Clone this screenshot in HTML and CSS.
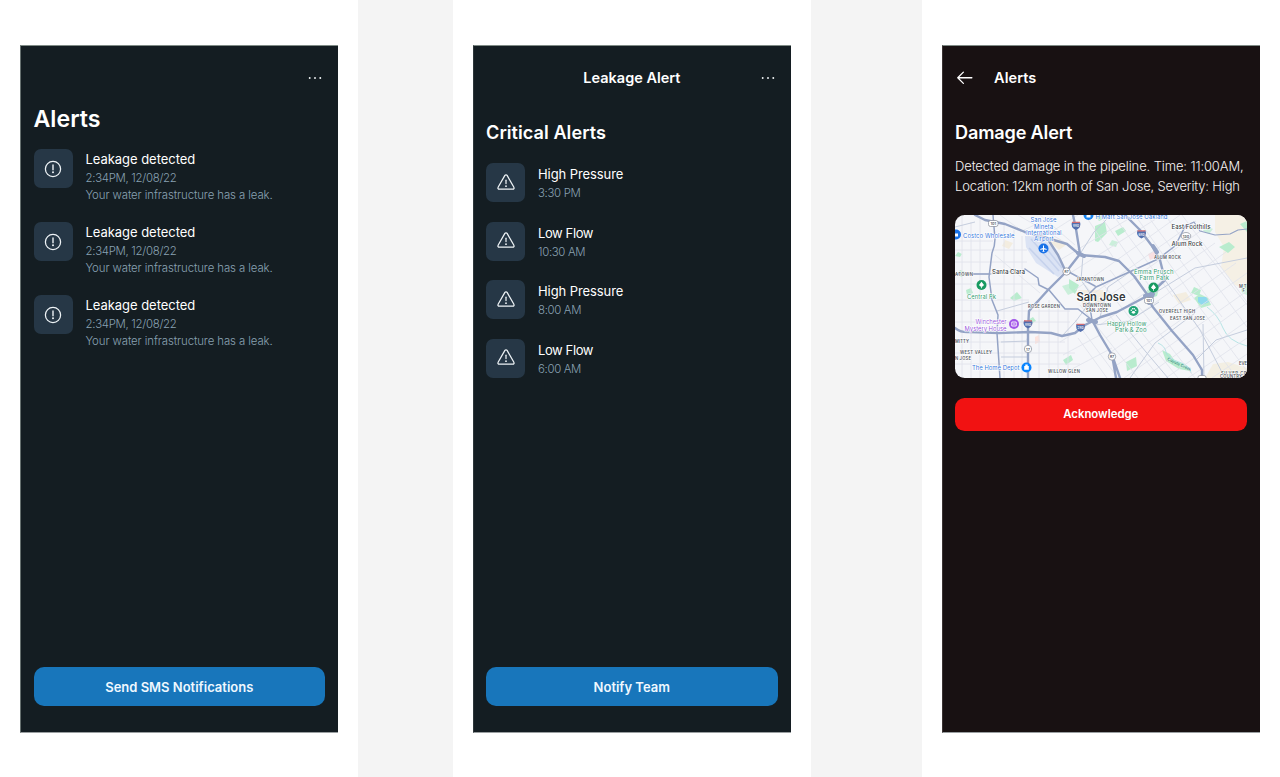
FILE: index.html
```html
<!DOCTYPE html>
<html lang="en">
<head>
<meta charset="utf-8">
<title>Alerts</title>
<link rel="stylesheet" href="styles.css">
</head>
<body>
<svg class="defs" width="0" height="0" aria-hidden="true">
  <symbol id="dots" viewBox="0 0 16 4"><circle cx="2.7" cy="2" r=".95"/><circle cx="8" cy="2" r=".95"/><circle cx="13.3" cy="2" r=".95"/></symbol>
  <symbol id="info" viewBox="0 0 20 20"><circle cx="10" cy="10" r="7.6" fill="none" stroke="currentColor" stroke-width="1.25"/><path d="M10 6v4.8" fill="none" stroke="currentColor" stroke-width="1.4" stroke-linecap="round"/><circle cx="10" cy="13.3" r="1"/></symbol>
  <symbol id="warn" viewBox="0 0 20 20"><path d="M8.9 2.4a1.3 1.3 0 0 1 2.2 0l6.8 11.9a1.25 1.25 0 0 1-1.1 1.9H3.2a1.25 1.25 0 0 1-1.1-1.9z" fill="none" stroke="currentColor" stroke-width="1.25" stroke-linejoin="round"/><path d="M10 7.2v3.4" fill="none" stroke="currentColor" stroke-width="1.25" stroke-linecap="round"/><circle cx="10" cy="13.2" r=".9"/></symbol>
</svg>
<main class="board">
  <section class="panel">
    <div class="phone">
      <header class="bar"><svg class="more"><use href="#dots"/></svg></header>
      <h1 class="title-lg">Alerts</h1>
      <ul class="list leaks">
        <li class="item"><span class="tile"><svg class="glyph"><use href="#info"/></svg></span><div class="copy"><p class="name t-leak">Leakage detected</p><p class="meta t-date">2:34PM, 12/08/22</p><p class="meta t-note">Your water infrastructure has a leak.</p></div></li>
        <li class="item"><span class="tile"><svg class="glyph"><use href="#info"/></svg></span><div class="copy"><p class="name t-leak">Leakage detected</p><p class="meta t-date">2:34PM, 12/08/22</p><p class="meta t-note">Your water infrastructure has a leak.</p></div></li>
        <li class="item"><span class="tile"><svg class="glyph"><use href="#info"/></svg></span><div class="copy"><p class="name t-leak">Leakage detected</p><p class="meta t-date">2:34PM, 12/08/22</p><p class="meta t-note">Your water infrastructure has a leak.</p></div></li>
      </ul>
      <button class="btn blue"><span class="t-sms">Send SMS Notifications</span></button>
    </div>
  </section>
  <section class="panel second">
    <div class="phone">
      <header class="bar"><span class="bar-title centered">Leakage Alert</span><svg class="more"><use href="#dots"/></svg></header>
      <h2 class="title t-critical">Critical Alerts</h2>
      <ul class="list critical">
        <li class="item"><span class="tile"><svg class="glyph"><use href="#warn"/></svg></span><div class="copy"><p class="name t-high">High Pressure</p><p class="meta t-time">3:30 PM</p></div></li>
        <li class="item"><span class="tile"><svg class="glyph"><use href="#warn"/></svg></span><div class="copy"><p class="name t-low">Low Flow</p><p class="meta t-time">10:30 AM</p></div></li>
        <li class="item"><span class="tile"><svg class="glyph"><use href="#warn"/></svg></span><div class="copy"><p class="name t-high">High Pressure</p><p class="meta t-time">8:00 AM</p></div></li>
        <li class="item"><span class="tile"><svg class="glyph"><use href="#warn"/></svg></span><div class="copy"><p class="name t-low">Low Flow</p><p class="meta t-time">6:00 AM</p></div></li>
      </ul>
      <button class="btn blue"><span class="t-notify">Notify Team</span></button>
    </div>
  </section>
  <section class="panel third">
    <div class="phone dark">
      <header class="bar left"><svg class="back" viewBox="0 0 20 20"><path d="M17.3 10H2.8M8.6 4.2 2.8 10l5.8 5.8" fill="none" stroke="currentColor" stroke-width="1.3" stroke-linecap="round" stroke-linejoin="round"/></svg><span class="bar-title t-back">Alerts</span></header>
      <h2 class="title t-damage">Damage Alert</h2>
      <p class="body"><span class="b1">Detected damage in the pipeline. Time: 11:00AM,</span><br><span class="b2">Location: 12km north of San Jose, Severity: High</span></p>
      <svg class="map" viewBox="955 215 292 163">
        <rect x="955" y="215" width="292" height="163" fill="#f5f6f9"/>
        <!-- terrain, parks and water -->
        <path d="M1215 215h32v75l-12-5-14-18 3-20-9-15z" fill="#f5f0e5"/>
        <path d="M1205 378l8-14 15-2 19 6v10z" fill="#f3efe3"/>
        <g fill="#f3ede0"><path d="M1050 242l10-3 6 6-7 5z"/><path d="M1005 240l8 3-4 6-7-3z"/><path d="M1173 295l13-3 5 8-12 4z"/><path d="M1078 290h25v16h-20z"/></g>
        <path d="M1025 236l18 1 14 17 9 17-8 6-22-14-10-16z" fill="#dbe3f4"/>
        <path d="M1031 239l28 32M1039 239l23 29M1029 248l25 26" stroke="#c6d2ec" stroke-width="1.6" fill="none"/>
        <g fill="#b9ecce">
          <path d="M1095 226l10-4 2 11-9 9-3-1zM1096 217l6-2 8 1-11 5zM1115 231l8-4 3 4-8 5zM1240 224l7-3v11zM1219 247l10-5 6 5-7 6zM1194 287l7 3-2 6-8-3zM1069 279l10 6-4 9-6-6zM1010 298l7-6 5 6-8 3zM966 290l5-2 2 5-6 2zM1147 290l12-2-2 8-12 4zM1162 350l8 4 5 7 10 3 5 7-11-2-13-8zM1126 362l10-5 1 9-10 5zM1063 360l8-5 2 5-7 5zM1028 320l5-3 3 4-5 3zM1194 298l6-4 8 4 3 7-10 3zM958 252l4 2-2 3-5-1zM960 270l5 2-3 5-5-2z"/>
          <path d="M1062 286l10-3 5 8-9 4zM1240 285l7-2v12l-5-2zM1112 240l6 2-2 5-7-2zM1206 226l7 3-4 5-6-3z" opacity=".7"/>
        </g>
        <path d="M1198 297l8 0 3 5-7 3-4-3z" fill="#8ed9ee"/>
        <path d="M1148 254l7-3 2 6-7 3z" fill="#f9e0e2"/><path d="M1035 337l4-2 1 7-5 2z" fill="#fbe3de"/>
        <path d="M1158 343q7 3 8 9t13 10 12 11M1207 307q11 8 16 21t24 18" stroke="#a7dfe0" stroke-width=".8" fill="none"/>
        <!-- local streets -->
        <g stroke="#dfe2eb" stroke-width=".8" fill="none">
          <path d="M955 241h38M955 250h72M955 262h72M955 284h85M955 300h74M955 311h115M955 322h115M955 342h110M955 353h120M955 364h125M962 215v163M971 222v156M980 219v159M1004 225v153M1014 230v148M1022 236v142M1039 300v78M1049 300v78M1058 305v73M1068 310v68"/>
          <path d="M1000 215l30 22M1018 215l48 28M1040 215l35 30M995 255l45 38M1085 215l28 42M1100 215l50 72M1113 215l60 82M1135 215l60 85M1147 215l75 102M1165 215l82 112M1182 215l65 87M1200 245l47 60M1085 285l75 93M1098 278l80 100M1110 270l85 108M1080 305l58 73M1075 320l43 58M1078 338l29 40M1180 303l57 75M1198 305l49 66"/>
          <path d="M1020 232l35-17M1048 234l30-19M1060 260l75-45M1067 275l95-60M1075 290l105-75M1086 299l110-78M1092 308l110-78M1100 325l115-82M1106 338l120-86M1111 352l125-89M1117 365l130-92M1124 378l123-87M1144 378l103-75M1166 378l81-57M1188 378l59-40M1212 378l35-24M1060 342l35-22M1063 355l37-20M1070 370l42-22"/>
        </g>
        <g stroke="#c5cddd" stroke-width="1" fill="none">
          <path d="M955 227l20-5M955 274h35l35-4M997 311l32-9M1001 342l27-1M1001 357h27M1062 336l14-15 14-19M1029 332l-2 8M1080 254l14-22 17-17M1083 255l-2 25 17 25M1100 317l8-30 25-17M1116 315l30 37 22 26M1095 325l34-4 30-19M1130 378l25-35 40-30M1150 296l45-28 52-10M1165 280l35 50 25 48M1203 324l1 54M1196 360l20-20 31-10"/>
        </g>
        <!-- highways -->
        <g stroke="#94a3c5" fill="none" stroke-linecap="round" stroke-linejoin="round">
          <g stroke-width="1.5">
            <path d="M955 274h35M993 215l2 24q0 7-3 14l-3 24 3 23 6 15-1 18 1 15 2 30"/>
            <path d="M1025 269l13 9 1 7 10 5 16 19h13l14 11M1092 320l-4-25 8-8 40-18 22-10 17-13 11-21M1095 286l-28-15"/>
            <path d="M1185 226l9-4 6 9 15 4 15-1 8-4 9-1" stroke-width="1.2"/>
          </g>
          <g stroke-width="2.4">
            <path d="M975 215l10 5 20 4 20 8 22 6 20 6 13 11 25 2 14 4 15 15 15 21 3 9 20 25 21 24 9 15v8"/>
            <path d="M1073 215l3 14 4 25-14 18-18 18-19 21-1 18v49M1047 238l11 17 8 17"/>
            <path d="M955 328q6 5 15 4l29 1 31-1 21 1 11 3 13-3 10-8 16-8 16-5 15-8 17-9 16-15-5-20-8-14-12-16-15-15"/>
            <path d="M1092 320l8 15 12 20 4 23M1112 355l8 23"/>
          </g>
          <path d="M1145 296l8-2-4 9M1088 320l8 2M1078 253l6 3M1153 246l4 6" stroke-width="4"/>
        </g>
        <!-- route shields -->
        <g stroke="#858b98" stroke-width=".7" fill="#fff">
          <rect x="988.5" y="220.5" width="9.5" height="6" rx="2"/><circle cx="1066.5" cy="271.5" r="3.7"/><circle cx="1028" cy="349" r="3.7"/><circle cx="1112" cy="356.500" r="3.7"/><ellipse cx="1186" cy="236" rx="4.800" ry="3.500"/><rect x="1144.500" y="297.500" width="9" height="6" rx="2"/><rect x="1198" y="375.500" width="8" height="6" rx="2"/>
        </g>
        <g class="shield-no"><text x="993.300" y="225.200">101</text><text x="1066.500" y="273">87</text><text x="1028" y="350.500">17</text><text x="1112" y="358">87</text><text x="1186" y="237.500">130</text><text x="1149" y="302.200">101</text></g>
        <g fill="#526fae"><path id="shield" d="M1072 222q4 1.500 8 0 2 5-4 8-6-3-4-8z"/><use href="#shield" x="65.500" y="8.500"/><use href="#shield" x="-48" y="98.500"/><use href="#shield" x="4.500" y="102"/></g>
        <g stroke="#d26d72" stroke-width="1.300"><path d="M1072 222.300h8M1137.500 230.800h8M1024 320.800h8M1076.500 324.300h8"/></g>
        <g class="shield-no inv"><text x="1076" y="227.300">880</text><text x="1141.500" y="235.800">680</text><text x="1028" y="325.800">880</text><text x="1080.500" y="329.300">280</text></g>
        <!-- place pins -->
        <g><circle cx="956" cy="234.500" r="5" fill="#1a73e8"/><circle cx="1043.500" cy="248.500" r="5" fill="#1a73e8"/><circle cx="1088.500" cy="215" r="5" fill="#1683f0"/><circle cx="1026.500" cy="367.500" r="5" fill="#0a85ff"/><circle cx="981.500" cy="285" r="5" fill="#189a61"/><circle cx="1153.500" cy="287.500" r="5" fill="#189a61"/><circle cx="1133.500" cy="311" r="5" fill="#22a477"/><circle cx="1014" cy="324" r="5" fill="#a257e8"/></g>
        <g fill="#fff"><path d="M1043 245.500h1v2.500l2.800 1v.8l-2.800-.4v1.600l1 .8h-3l1-.8v-1.600l-2.800.4v-.8l2.800-1z"/><path d="M981.500 281.700l2.500 3.300-1.300 1.500h-.8v1.700h-.8v-1.700h-.8l-1.300-1.500z"/><path d="M1153.500 284.200l2.500 3.300-1.300 1.500h-.8v1.700h-.8v-1.700h-.8l-1.300-1.500z"/><circle cx="1131.300" cy="310.300" r=".8"/><circle cx="1132.700" cy="308.700" r=".8"/><circle cx="1134.300" cy="308.700" r=".8"/><circle cx="1135.700" cy="310.300" r=".8"/><ellipse cx="1133.500" cy="312.300" rx="1.700" ry="1.400"/><path d="M1024.200 366h4.600v3.800h-4.600zM1025.300 366v-1.400h2.400v1.400zM954.500 233.500h3.500v3h-3.500zM1086.500 215h4v2.500h-4z"/></g>
        <path d="M1011.800 322h4.400v4h-4.400zM1013 324h2" stroke="#fff" stroke-width=".9" fill="none"/>
        <!-- labels -->
        <g class="lbl blue-l"><text x="963" y="237.800" textLength="51.500">Costco Wholesale</text><text x="1030.500" y="222" textLength="26">San Jose</text><text x="1034" y="228.500" textLength="19">Mineta</text><text x="1026" y="235" textLength="35.500">International</text><text x="1034" y="241.300" textLength="19.500">Airport</text><text x="1095.500" y="218.600" textLength="72">H Mart San Jose Oakland</text><text x="972" y="370.300" textLength="47.500">The Home Depot</text></g>
        <g class="lbl green-l"><text x="967" y="298.800" textLength="29">Central Pk</text><text x="1134" y="273.700" textLength="39.500">Emma Prusch</text><text x="1139.500" y="280" textLength="29.500">Farm Park</text><text x="1107" y="325.500" textLength="39.500">Happy Hollow</text><text x="1115" y="331.700" textLength="31.500">Park &amp; Zoo</text><text class="creek" x="1167" y="360" transform="rotate(25 1167 360)">Coyote Creek</text></g>
        <g class="lbl purple-l"><text x="975.500" y="324" textLength="31">Winchester</text><text x="964.500" y="330.500" textLength="42">Mystery House</text></g>
        <g class="lbl town"><text x="992" y="273.500" textLength="33">Santa Clara</text><text x="1171.500" y="228.500" textLength="39">East Foothills</text><text x="1171.500" y="245.500" textLength="31">Alum Rock</text></g>
        <text class="city" x="1076.500" y="301" textLength="49">San Jose</text>
        <g class="hood"><text x="955" y="276" textLength="18">ATOWN</text><text x="1076" y="280.500" textLength="28">JAPANTOWN</text><text x="1154" y="259.300" textLength="27">ALUM ROCK</text><text x="1028" y="307.800" textLength="32">ROSE GARDEN</text><text x="1083" y="307.300" textLength="28">DOWNTOWN</text><text x="1086" y="311.800" textLength="22">SAN JOSE</text><text x="1159" y="312.500" textLength="36">OVERFELT HIGH</text><text x="1170" y="319.500" textLength="35">EAST SAN JOSE</text><text x="955" y="343.300" textLength="14">MITTY</text><text x="960" y="354.300" textLength="32">WEST VALLEY</text><text x="955" y="359.500" textLength="16">N JOSE</text><text x="1048" y="372.500" textLength="32">WILLOW GLEN</text><text x="1239" y="288.300" textLength="7.500">MT</text><text x="1242.500" y="292.300">F</text><text x="1239" y="364.500">EVE</text><text x="1221" y="374.500" textLength="25.500">SILVER CR</text><text x="1220" y="378" textLength="26.500">COUNTRY C</text></g>
      </svg>
      <button class="btn red"><span class="t-ack">Acknowledge</span></button>
    </div>
  </section>
</main>
</body>
</html>
```

FILE: styles.css
```css
* { box-sizing: border-box; margin: 0; padding: 0; }
body { background: #f4f4f4; font-family: Inter, "Liberation Sans", sans-serif; overflow: hidden; }
.defs { display: block; position: absolute; }
.board { display: flex; height: 777px; }
.panel { width: 358px; flex: none; background: #fff; padding: 45px 20px 44px; }
.second { margin-left: 95px; }
.third { margin-left: 111px; }
.phone { width: 318px; height: 688px; background: #141d22; border-top: 1px solid #7f8b86; border-left: 1px solid #66706f; border-bottom: 1px solid #9a9fa1; color: #fff; padding: 0 13px 26px 12.500px; display: flex; flex-direction: column; }
.second .phone, .third .phone { border-left-color: #2d363a; padding-left: 12px; padding-right: 13.500px; }
.phone.dark { background: #181112; }
.third .phone { border-left-color: #3a3333; }
.bar { height: 64px; flex: none; display: flex; align-items: center; justify-content: flex-end; padding-right: 2px; }
.bar.left { justify-content: flex-start; }
.more { width: 16px; height: 4px; fill: #f3f6f8; }
.bar-title { font-size: 14.500px; font-weight: 600; line-height: 20px; white-space: nowrap; }
.centered { margin-right: 79px; }
.t-back { letter-spacing: .08px; }
.back { width: 19.500px; height: 19.500px; margin-right: 19.500px; }
.title-lg { font-size: 23.200px; font-weight: 600; line-height: 30px; margin-top: -6px; }
.title { font-size: 18.100px; font-weight: 600; line-height: 24px; margin-top: 10px; white-space: nowrap; }
.t-damage { letter-spacing: -.16px; }
.t-critical { letter-spacing: .05px; }
.list { list-style: none; display: flex; flex-direction: column; }
.leaks { gap: 20.200px; margin-top: 15px; }
.critical { gap: 19.600px; margin-top: 19px; }
.item { display: flex; gap: 13px; }
.leaks .item { height: 53px; }
.tile { width: 39px; height: 39px; flex: none; border-radius: 7px; background: #263746; color: #eef3f6; display: grid; place-items: center; }
.glyph { width: 20px; height: 20px; fill: currentColor; }
.critical .copy { padding-top: 1px; }
.name { font-size: 13px; line-height: 20px; white-space: nowrap; }
.meta { font-size: 11.400px; line-height: 17.500px; color: #89a1b2; font-weight: 300; white-space: nowrap; }
.t-leak { letter-spacing: -.04px; }
.t-date { letter-spacing: -.28px; line-height: 18px; }
.t-note { letter-spacing: -.09px; line-height: 17px; }
.t-high { letter-spacing: -.08px; }
.t-low { letter-spacing: -.4px; }
.t-time { letter-spacing: -.32px; line-height: 18px; }
.btn { width: 100%; border: 0; color: #fff; font-family: inherit; font-weight: 600; display: flex; align-items: center; justify-content: center; flex: none; white-space: nowrap; }
.blue { height: 39px; border-radius: 10px; background: #1876bb; font-size: 13px; margin-top: auto; color: #eff8ff; }
.red { height: 32.500px; border-radius: 9.500px; background: #f11212; font-size: 11.400px; margin-top: 20px; }
.body { margin-top: 13px; font-size: 13px; font-weight: 300; line-height: 19.500px; color: #f7f3f3; white-space: nowrap; }
.b1 { letter-spacing: -.12px; }
.b2 { letter-spacing: -.18px; }
.map { width: 292px; height: 163px; flex: none; margin-top: 19px; border-radius: 9.500px; display: block; }
.lbl { font-size: 6px; stroke: #fff; stroke-width: 1.200px; paint-order: stroke; }
.blue-l { fill: #3478dc; }
.green-l { fill: #2f9b70; }
.creek { font-size: 4px; fill: #23807c; stroke: none; }
.purple-l { fill: #9a55dd; }
.town { fill: #383d43; font-weight: 500; font-size: 6.200px; }
.city { fill: #33373c; font-size: 11.200px; font-weight: 600; stroke: #fff; stroke-width: 1.500px; paint-order: stroke; }
.hood { fill: #53585f; font-size: 4.200px; font-weight: 600; stroke: #fff; stroke-width: .8px; paint-order: stroke; }
.shield-no { fill: #555c66; font-size: 3.800px; font-weight: 600; text-anchor: middle; }
.inv { fill: #fff; font-size: 3px; }
```
